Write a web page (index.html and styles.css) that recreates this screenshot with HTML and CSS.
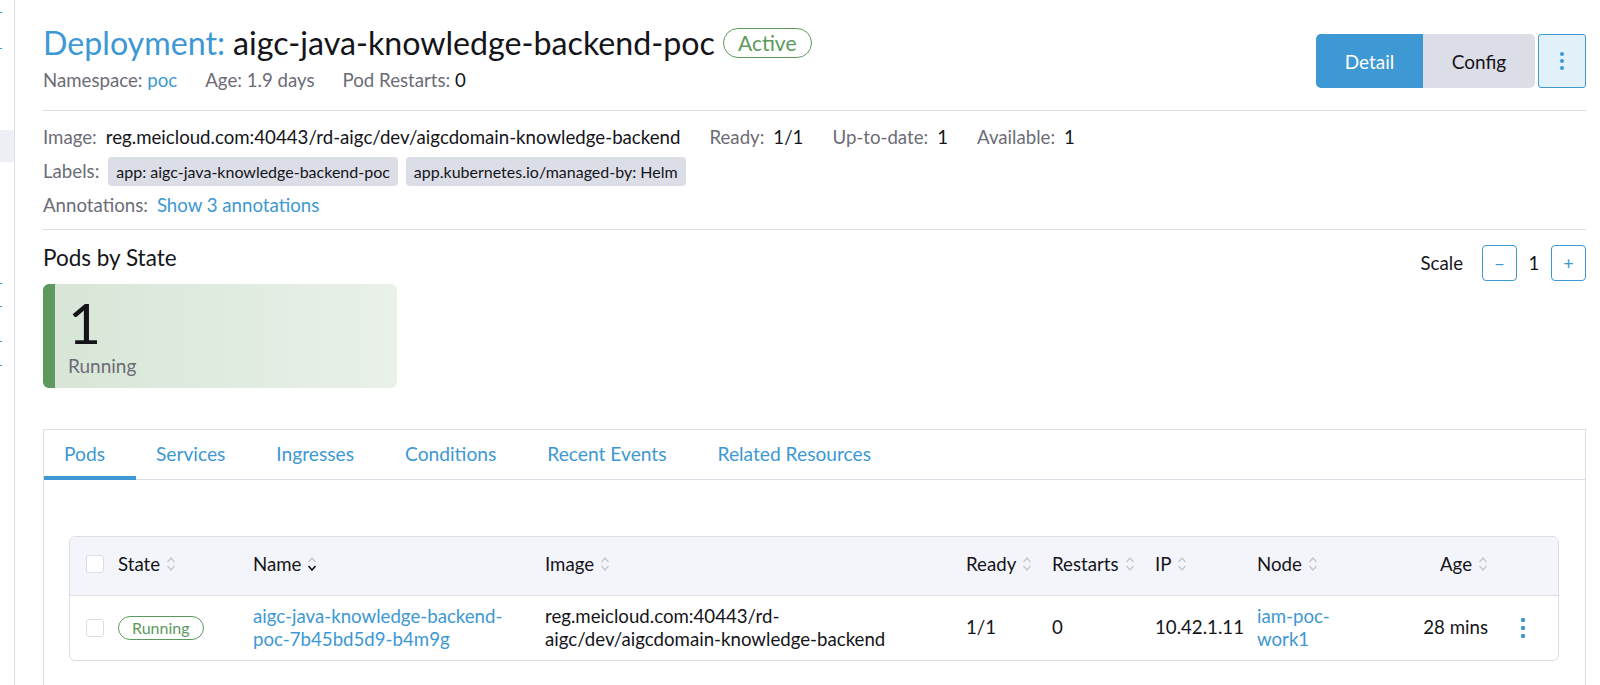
FILE: index.html
```html
<!DOCTYPE html>
<html>
<head>
<meta charset="utf-8">
<link rel="stylesheet" href="styles.css">
</head>
<body>
<div class="app">
  <aside class="sidebar">
    <span class="tick t1"></span>
    <span class="tick t2"></span>
    <span class="side-active"></span>
    <span class="tick t3"></span>
    <span class="tick t4"></span>
    <span class="tick t5"></span>
    <span class="tick t6"></span>
  </aside>
  <main class="main">
    <header class="masthead">
      <div class="title-block">
        <h1 class="title"><span class="kind">Deployment:</span> aigc-java-knowledge-backend-poc <span class="badge-active">Active</span></h1>
        <div class="meta">
          <span class="meta-item"><span class="lbl">Namespace:</span> <a class="link">poc</a></span>
          <span class="meta-item m-age"><span class="lbl">Age:</span> <span class="lbl">1.9 days</span></span>
          <span class="meta-item m-pod"><span class="lbl">Pod Restarts:</span> <span class="val">0</span></span>
        </div>
      </div>
      <div class="actions">
        <div class="btn-group">
          <button class="btn btn-primary">Detail</button>
          <button class="btn btn-muted">Config</button>
        </div>
        <button class="btn-kebab" aria-label="more">
          <svg width="6" height="20" viewBox="0 0 6 20"><circle cx="3" cy="3" r="2" fill="#3d98d3"/><circle cx="3" cy="10" r="2" fill="#3d98d3"/><circle cx="3" cy="17" r="2" fill="#3d98d3"/></svg>
        </button>
      </div>
    </header>

    <section class="details">
      <div class="drow">
        <span class="lbl">Image:</span><span class="val">reg.meicloud.com:40443/rd-aigc/dev/aigcdomain-knowledge-backend</span>
        <span class="lbl gap">Ready:</span><span class="val">1/1</span>
        <span class="lbl gap">Up-to-date:</span><span class="val">1</span>
        <span class="lbl gap">Available:</span><span class="val">1</span>
      </div>
      <div class="drow">
        <span class="lbl">Labels:</span>
        <span class="tag">app: aigc-java-knowledge-backend-poc</span>
        <span class="tag">app.kubernetes.io/managed-by: Helm</span>
      </div>
      <div class="drow">
        <span class="lbl">Annotations:</span><a class="link">Show 3 annotations</a>
      </div>
    </section>

    <section class="pods-state">
      <div class="ps-head">
        <h3 class="ps-title">Pods by State</h3>
        <div class="scale">
          <span class="scale-lbl">Scale</span>
          <button class="scale-btn">−</button>
          <span class="scale-val">1</span>
          <button class="scale-btn">+</button>
        </div>
      </div>
      <div class="state-card">
        <div class="sc-count">1</div>
        <div class="sc-label">Running</div>
      </div>
    </section>

    <section class="tabbox">
      <nav class="tabs">
        <a class="tab active">Pods</a>
        <a class="tab">Services</a>
        <a class="tab">Ingresses</a>
        <a class="tab">Conditions</a>
        <a class="tab">Recent Events</a>
        <a class="tab">Related Resources</a>
      </nav>
      <div class="tab-body">
        <div class="table">
          <div class="tr thead">
            <div class="td c-check"><span class="cbox"></span></div>
            <div class="td">State <svg class="sort" width="10" height="18" viewBox="0 0 10 18"><path d="M1.5 7 L5 3 L8.5 7" /><path d="M1.5 11 L5 15 L8.5 11" /></svg></div>
            <div class="td">Name <svg class="sort" width="10" height="18" viewBox="0 0 10 18"><path d="M1.5 7 L5 3 L8.5 7" /><path class="on" d="M1.5 11 L5 15 L8.5 11" /></svg></div>
            <div class="td">Image <svg class="sort" width="10" height="18" viewBox="0 0 10 18"><path d="M1.5 7 L5 3 L8.5 7" /><path d="M1.5 11 L5 15 L8.5 11" /></svg></div>
            <div class="td">Ready <svg class="sort" width="10" height="18" viewBox="0 0 10 18"><path d="M1.5 7 L5 3 L8.5 7" /><path d="M1.5 11 L5 15 L8.5 11" /></svg></div>
            <div class="td">Restarts <svg class="sort" width="10" height="18" viewBox="0 0 10 18"><path d="M1.5 7 L5 3 L8.5 7" /><path d="M1.5 11 L5 15 L8.5 11" /></svg></div>
            <div class="td">IP <svg class="sort" width="10" height="18" viewBox="0 0 10 18"><path d="M1.5 7 L5 3 L8.5 7" /><path d="M1.5 11 L5 15 L8.5 11" /></svg></div>
            <div class="td">Node <svg class="sort" width="10" height="18" viewBox="0 0 10 18"><path d="M1.5 7 L5 3 L8.5 7" /><path d="M1.5 11 L5 15 L8.5 11" /></svg></div>
            <div class="td c-age">Age <svg class="sort" width="10" height="18" viewBox="0 0 10 18"><path d="M1.5 7 L5 3 L8.5 7" /><path d="M1.5 11 L5 15 L8.5 11" /></svg></div>
            <div class="td"></div>
          </div>
          <div class="tr tbody">
            <div class="td c-check"><span class="cbox"></span></div>
            <div class="td"><span class="badge-running">Running</span></div>
            <div class="td wrap"><a class="link">aigc-java-knowledge-backend-poc-7b45bd5d9-b4m9g</a></div>
            <div class="td wrap wide">reg.meicloud.com:40443/rd-aigc/dev/aigcdomain-knowledge-backend</div>
            <div class="td">1/1</div>
            <div class="td">0</div>
            <div class="td">10.42.1.11</div>
            <div class="td wrap"><a class="link">iam-poc-work1</a></div>
            <div class="td c-age">28 mins</div>
            <div class="td c-act">
              <svg width="6" height="22" viewBox="0 0 6 22"><circle cx="3" cy="3" r="2.2" fill="#3d98d3"/><circle cx="3" cy="11" r="2.2" fill="#3d98d3"/><circle cx="3" cy="19" r="2.2" fill="#3d98d3"/></svg>
            </div>
          </div>
        </div>
      </div>
    </section>
  </main>
</div>
</body>
</html>
```

FILE: styles.css
```css
* { box-sizing: border-box; }
html, body { margin: 0; padding: 0; background: #fff; }
body {
  font-family: Lato, "Open Sans", "Liberation Sans", sans-serif;
  color: #141419;
  font-size: 18.67px;
  height: 685px;
  overflow: hidden;
}
.app { display: flex; height: 685px; }

.sidebar {
  width: 15px;
  flex: none;
  border-right: 1px solid #dcdee7;
  display: flex;
  flex-direction: column;
}
.tick { display: block; width: 2px; height: 1px; background: #3d98d3; }
.t1 { margin-top: 12px; }
.t2 { margin-top: 35px; }
.side-active { display: block; height: 32px; background: #eef0f5; margin-top: 81px; }
.t3 { margin-top: 121px; }
.t4 { margin-top: 22px; }
.t5 { margin-top: 34px; }
.t6 { margin-top: 23px; }

.main { flex: 1; padding: 20px 14px 0 28px; min-width: 0; }

.masthead {
  display: flex;
  justify-content: space-between;
  align-items: flex-start;
  padding-bottom: 16px;
  border-bottom: 1px solid #dcdee7;
}
.title { margin: 0; font-size: 32.2px; font-weight: 400; line-height: 46px; display: flex; align-items: center; }
.kind { color: #3d98d3; margin-right: 8px; }
.badge-active {
  margin-left: 8px;
  font-size: 21px;
  line-height: 28px;
  padding: 0 14px;
  border: 1px solid #5d995d;
  color: #5d995d;
  border-radius: 15px;
}
.meta { display: flex; line-height: 28px; }
.m-age { margin-left: 28px; }
.m-pod { margin-left: 28px; }
.lbl { color: #6c6c76; }
.val { color: #141419; }
.link { color: #3d98d3; text-decoration: none; cursor: pointer; }

.actions { display: flex; gap: 3px; margin-top: 14px; }
.btn-group { display: flex; border-radius: 5px; overflow: hidden; }
.btn {
  border: 0;
  font-family: inherit;
  font-size: 19px;
  height: 54px;
  padding: 0;
  cursor: pointer;
}
.btn-primary { background: #3d98d3; color: #fff; width: 107px; }
.btn-muted { background: #dcdee7; color: #141419; width: 112px; }
.btn-kebab {
  width: 48px; height: 54px;
  background: #e2f0f9;
  border: 1px solid #3d98d3;
  border-radius: 3px;
  display: flex; align-items: center; justify-content: center;
  padding: 0;
}

.details { padding: 9px 0 7px; border-bottom: 1px solid #dcdee7; }
.drow { display: flex; align-items: center; height: 34px; }
.drow .lbl { margin-right: 9px; }
.drow .gap { margin-left: 29px; }
.tag {
  background: #dcdee7;
  color: #141419;
  font-size: 16px;
  line-height: 29px;
  padding: 0 8px;
  border-radius: 4px;
  margin-right: 8px;
}

.pods-state { padding-top: 14px; }
.ps-head { display: flex; justify-content: space-between; align-items: flex-start; }
.ps-title { margin: 0; font-size: 22.5px; font-weight: 400; line-height: 28px; }
.scale { display: flex; align-items: center; margin-top: 1px; }
.scale-lbl { margin-right: 19px; }
.scale-btn {
  width: 35px; height: 36px;
  border: 1px solid #3d98d3;
  background: #fff;
  color: #3d98d3;
  border-radius: 4px;
  font-family: inherit;
  font-size: 18px;
  padding: 0;
}
.scale-val { width: 34px; text-align: center; }

.state-card {
  margin-top: 3px;
  width: 354px;
  height: 104px;
  border-left: 12px solid #5d995d;
  border-radius: 6px;
  background: linear-gradient(90deg, #d7e6d7 0%, #e9f1e9 100%);
  padding: 8px 0 0 13px;
}
.sc-count { font-size: 57px; line-height: 60px; }
.sc-label { font-size: 19px; color: #6c6c76; line-height: 24px; margin-top: 2px; }

.tabbox {
  margin-top: 41px;
  border: 1px solid #dcdee7;
  border-bottom: 0;
  height: 262px;
}
.tabs { display: flex; border-bottom: 1px solid #dcdee7; height: 50px; }
.tab {
  color: #3d98d3;
  font-size: 19.2px;
  padding: 0 31px 0 20px;
  display: flex; align-items: center;
  border-bottom: 4px solid transparent;
  margin-bottom: -1px;
}
.tab.active { border-bottom-color: #3d98d3; }

.tab-body { padding: 56px 26px 0 25px; }
.table { border: 1px solid #dcdee7; border-radius: 6px; overflow: hidden; }
.tr {
  display: grid;
  grid-template-columns: 48px 135px 292px 421px 86px 103px 102px 110px 121px 1fr;
  align-items: center;
}
.thead { background: #f4f5fa; height: 59px; border-bottom: 1px solid #dcdee7; padding-bottom: 4px; }
.tbody { height: 64px; line-height: 23.5px; }
.td { display: flex; align-items: center; }
.c-check { padding-left: 16px; }
.c-age { justify-content: flex-end; }
.c-act { justify-content: center; }
.cbox {
  width: 18px; height: 18px;
  border: 1px solid #dcdee7;
  border-radius: 3px;
  background: #fff;
}
.sort { margin-left: 6px; }
.sort path { fill: none; stroke: #c4c5cd; stroke-width: 1.2; }
.sort path.on { stroke: #141419; stroke-width: 1.6; }
.tbody .td { display: block; }
.tbody .wrap { padding-right: 12px; }
.tbody .wide { padding-right: 24px; }
.tbody .c-check { display: flex; }
.tbody .c-age { text-align: right; }
.tbody .c-act { display: flex; }
.badge-running {
  display: inline-block;
  font-size: 16px;
  line-height: 22px;
  padding: 0 13px;
  border: 1px solid #5d995d;
  color: #5d995d;
  border-radius: 13px;
}
```
